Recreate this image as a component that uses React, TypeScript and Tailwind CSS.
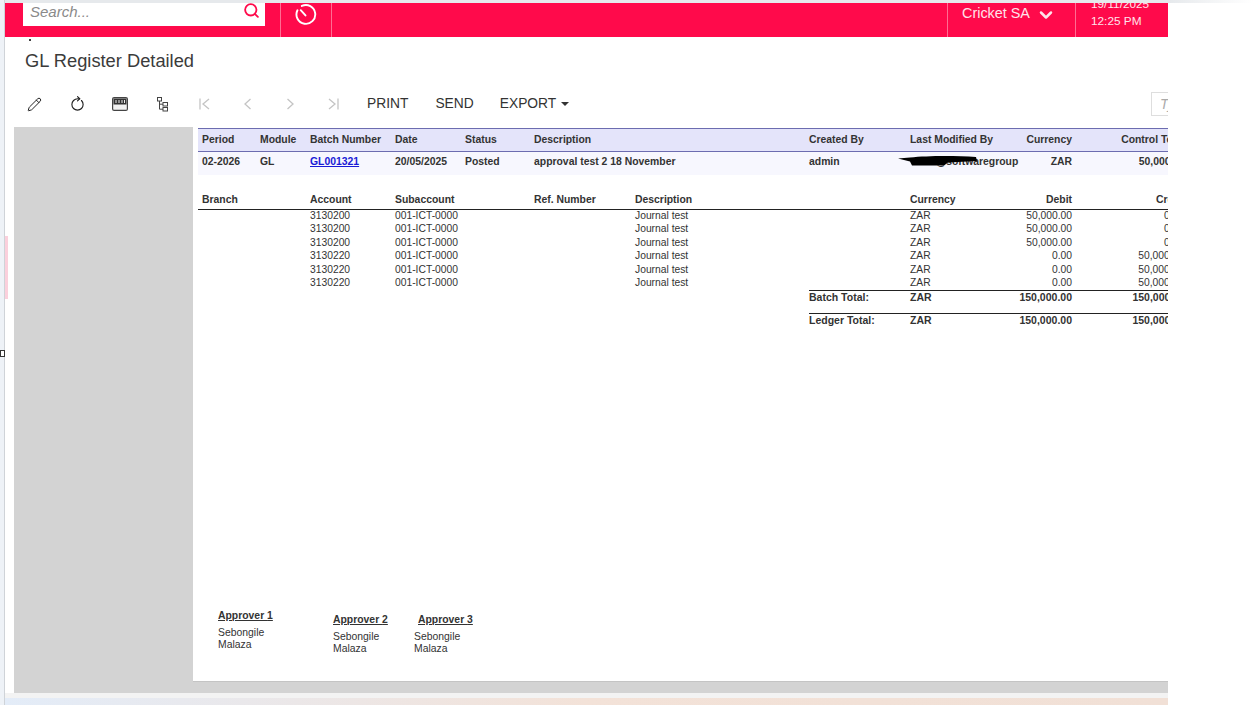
import { Pencil, RotateCw, Search, ChevronDown } from "lucide-react";

const detailCols = "grid grid-cols-[108px_85px_139px_101px_275px_62px_100px_114px] pl-[4px] w-[1000px]";
const headerCols = "grid grid-cols-[58px_50px_85px_70px_69px_275px_101px_110px_52px_113px] pl-[4px] w-[1000px]";
const totalCols = "grid grid-cols-[101px_61px_101px_113px] w-[389px] ml-[611px] border-t border-[#222] h-[12px] leading-[12px] font-bold text-[10.5px] text-[#333]";

const lines = [
  ["3130200", "50,000.00", "0.00"],
  ["3130200", "50,000.00", "0.00"],
  ["3130200", "50,000.00", "0.00"],
  ["3130220", "0.00", "50,000.00"],
  ["3130220", "0.00", "50,000.00"],
  ["3130220", "0.00", "50,000.00"],
];

function ToolIcon({ children }: { children: React.ReactNode }) {
  return <div className="w-[42.5px] flex-none flex items-center justify-center">{children}</div>;
}

function Nav({ d, bar }: { d: string; bar?: number }) {
  return (
    <svg width="16" height="16" viewBox="0 0 16 16" fill="none" stroke="#c4c4c4" strokeWidth="1.3">
      <path d={d} />
      {bar !== undefined && <path d={`M${bar} 2.5V13.5`} />}
    </svg>
  );
}

function Approver({ n, offset }: { n: number; offset?: boolean }) {
  return (
    <div className="text-[#333]">
      <div className={`font-bold text-[10.4px] leading-[12px] underline ${offset ? "pl-[4px]" : ""}`}>Approver {n}</div>
      <div className="text-[10.4px] leading-[12px] mt-[5px] w-[60px]">Sebongile Malaza</div>
    </div>
  );
}

export default function App() {
  return (
    <div className="relative flex h-[705px] w-[1253px] overflow-hidden bg-white font-['Liberation_Sans',Arial,sans-serif]">
      <div className="w-[5px] flex-none bg-[#eef2f7] border-r border-[#cfd3d8]" />

      <div className="w-[1163px] flex-none flex flex-col">
        <div className="h-[3px] bg-[#e6e9ec]" />

        <div className="h-[34px] flex-none flex bg-[#ff0a4b] text-white">
          <div className="w-[275px] flex-none pl-[18px]">
            <div className="relative w-[242px] h-[23px] bg-white flex items-center pl-[7px] pb-[4px] text-[15px] italic text-[#8a8a8a]">
              Search...
              <Search className="absolute right-[5px] -top-[1px] text-[#ff0a4b]" size={17} strokeWidth={2.6} />
            </div>
          </div>
          <div className="w-[52px] flex-none border-x border-[#ff6d92] flex items-center justify-center pb-[12px] pr-[2px]">
            <svg width="23" height="23" viewBox="0 0 24 24" fill="none" stroke="white" strokeWidth="2" strokeLinecap="round">
              <path d="M8.2 3.1A9.8 9.8 0 1 1 3.600 7.600" />
              <path d="M7 7.500L12 13" />
            </svg>
          </div>
          <div className="flex-1" />
          <div className="w-[128px] flex-none border-l border-[#ff6d92] flex items-center pl-[14px] pb-[12px] text-[14.4px] text-[#ffe3ea]">
            Cricket SA
            <ChevronDown className="ml-[6px] mt-[2px]" size={20} strokeWidth={3} />
          </div>
          <div className="w-[93px] flex-none border-l border-[#ff6d92] overflow-hidden flex flex-col justify-end pl-[15px] pb-[7px] text-[11.8px] leading-[17px] text-[#ffe3ea]">
            <div>19/11/2025</div>
            <div>12:25 PM</div>
          </div>
        </div>

        <div className="relative h-[51px] flex-none pl-[20px] pt-[13px] text-[18.3px] leading-[22px] text-[#3b3b3b]">
          <span className="absolute left-[24px] top-[2px] h-[2px] w-[2px] rounded-full bg-black" />
          GL Register Detailed
        </div>

        <div className="h-[32px] flex-none flex items-center pl-[9px] overflow-hidden text-[13.8px] text-[#333]">
          <ToolIcon><Pencil size={15} strokeWidth={1.6} className="text-[#222] -ml-[1px]" /></ToolIcon>
          <ToolIcon><RotateCw size={15} strokeWidth={1.8} className="text-[#222] -rotate-45" /></ToolIcon>
          <ToolIcon>
            <svg width="16" height="14" viewBox="0 0 16 14">
              <rect x="0.6" y="0.6" width="14.8" height="12.8" rx="1.5" fill="#f2f2f2" stroke="#444" strokeWidth="1.2" />
              <rect x="1.5" y="1.5" width="13" height="6" fill="#333" />
              <path d="M4 3v3M7 3v3M10 3v3M12.5 3v3" stroke="#eee" strokeWidth="1" />
            </svg>
          </ToolIcon>
          <ToolIcon>
            <svg width="11" height="15" viewBox="0 0 11 15" fill="none" stroke="#444" strokeWidth="1">
              <rect x="0.5" y="0.5" width="4" height="3.5" />
              <rect x="6" y="5.5" width="4.5" height="3.5" />
              <rect x="6" y="10.5" width="4.5" height="3.5" />
              <path d="M2.5 4V12.2H6M2.5 7.2H6" />
            </svg>
          </ToolIcon>
          <ToolIcon><Nav d="M12 3L6 8l6 5" bar={3} /></ToolIcon>
          <ToolIcon><Nav d="M10.5 3L5 8l5.500 5" /></ToolIcon>
          <ToolIcon><Nav d="M5.500 3L11 8l-5.500 5" /></ToolIcon>
          <ToolIcon><Nav d="M4 3l6 5-6 5" bar={13} /></ToolIcon>
          <span className="ml-[13px]">PRINT</span>
          <span className="ml-[27px]">SEND</span>
          <span className="ml-[26px] flex items-center">
            EXPORT
            <span className="ml-[5px] border-x-[4px] border-t-[4px] border-x-transparent border-t-[#333]" />
          </span>
          <div className="ml-auto -mr-[33px] w-[50px] h-[24px] flex-none border border-[#dedede] pl-[8px] text-[14px] italic leading-[22px] text-[#aaa]">Ty</div>
        </div>

        <div className="mt-[7px] ml-[9px] h-[566px] flex-none bg-[#d3d3d3] overflow-hidden">
          <div className="ml-[179px] h-[555px] bg-white pl-[5px] pt-[1px] border-b border-[#c4c4c4] flex flex-col overflow-hidden">
            <div className={`${headerCols} h-[24px] bg-[#e4e4fa] border-y border-[#6c6cb0] items-center font-bold text-[10.4px] text-[#333]`}>
              <span>Period</span>
              <span>Module</span>
              <span>Batch Number</span>
              <span>Date</span>
              <span>Status</span>
              <span>Description</span>
              <span>Created By</span>
              <span>Last Modified By</span>
              <span className="text-right">Currency</span>
              <span className="text-right whitespace-nowrap">Control Total</span>
            </div>
            <div className={`${headerCols} h-[23px] pb-[4px] bg-[#f7f7fe] items-center font-bold text-[10.4px] text-[#333]`}>
              <span>02-2026</span>
              <span>GL</span>
              <span className="text-[#1a1ad6] underline">GL001321</span>
              <span>20/05/2025</span>
              <span>Posted</span>
              <span>approval test 2 18 November</span>
              <span>admin</span>
              <span className="relative whitespace-nowrap">
                <span className="pl-[26px]">@softwaregroup</span>
                <svg className="absolute left-[-12px] top-[1px]" width="82" height="13" viewBox="0 0 82 13">
                  <path d="M0 3.500L12 2.500C30 .5 58 .5 78 2L79 6L50 7.500L46 10.500L14 10.500L12 6.500Z" fill="#000" />
                </svg>
              </span>
              <span className="text-right">ZAR</span>
              <span className="text-right">50,000.00</span>
            </div>

            <div className={`${detailCols} mt-[15px] h-[20px] border-b border-[#222] items-center font-bold text-[10.4px] text-[#333]`}>
              <span>Branch</span>
              <span>Account</span>
              <span>Subaccount</span>
              <span>Ref. Number</span>
              <span>Description</span>
              <span>Currency</span>
              <span className="text-right">Debit</span>
              <span className="text-right">Credit</span>
            </div>
            {lines.map((l, i) => (
              <div key={i} className={`${detailCols} h-[13.4px] leading-[12px] text-[10.3px] text-[#333]`}>
                <span />
                <span>{l[0]}</span>
                <span>001-ICT-0000</span>
                <span />
                <span>Journal test</span>
                <span>ZAR</span>
                <span className="text-right">{l[1]}</span>
                <span className="text-right pr-[2px]">{l[2]}</span>
              </div>
            ))}
            <div className={totalCols}>
              <span>Batch Total:</span>
              <span>ZAR</span>
              <span className="text-right">150,000.00</span>
              <span className="text-right">150,000.00</span>
            </div>
            <div className={`${totalCols} mt-[11px]`}>
              <span>Ledger Total:</span>
              <span>ZAR</span>
              <span className="text-right">150,000.00</span>
              <span className="text-right">150,000.00</span>
            </div>

            <div className="flex mt-[285px] pl-[20px]">
              <div className="w-[60px]"><Approver n={1} /></div>
              <div className="ml-[55px] mt-[4px]"><Approver n={2} /></div>
              <div className="ml-[21px] mt-[4px]"><Approver n={3} offset /></div>
            </div>
          </div>
        </div>

        <div className="h-[5px] flex-none bg-[#f3f3f3]" />
        <div className="flex-1 bg-gradient-to-r from-[#e3ecf8] via-[#f3e2d8] to-[#f1e0d6]" />
      </div>

      <div className="flex-1">
        <div className="h-[3px] bg-gradient-to-r from-[#e6e9ec] to-white" />
      </div>

      <span className="absolute left-[5px] top-[236px] h-[63px] w-[3px] bg-[#fbd0dc]" />
      <span className="absolute left-0 top-[350px] h-[7px] w-[5px] border border-[#333] bg-white" />
    </div>
  );
}
